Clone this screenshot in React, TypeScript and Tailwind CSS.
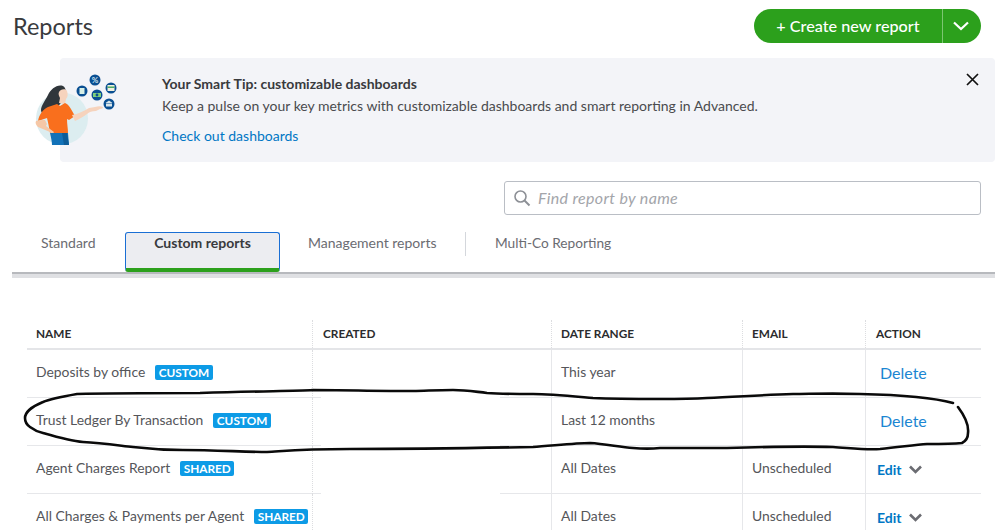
import React from "react";

const font = { fontFamily: '"Lato", "Open Sans", sans-serif' };

function Badge({ children }: { children: React.ReactNode }) {
  return (
    <span className="ml-[10px] inline-flex h-[15px] shrink-0 items-center rounded-[2px] bg-[#0d9be6] px-[3.5px] text-[11.8px] font-bold leading-none text-white">
      {children}
    </span>
  );
}

function Illustration() {
  return (
    <svg className="absolute left-[-25px] top-[13px]" width="90" height="78" viewBox="0 0 90 78">
      <circle cx="27" cy="47.5" r="26" fill="#dcedf0" />
      <path d="M28 15c-6-2-12 3-15 9-3 6-7 11-7 15 0 4 5 6 9 4l7-7c4-3 8-9 9-14 0-3-1-6-3-7z" fill="#30363b" />
      <path d="M24 21c1-3 7-4 8-1 1 3 1 6-1 8l-1 5-6-1 1-5c-1-2-2-4-1-6z" fill="#f6d3bd" />
      <path d="M15 62c-1-6-2-11-3-15l-9 3c1-6 5-12 10-14l9-3 3 2 5-3c4 1 7 8 10 13l-6 4-2-1c0 5 1 10 1 14z" fill="#f96f1d" />
      <path d="M1 50c-1 2 0 4 2 6l12 5 2 3 2-3-8-6 1-2-2-4c-3 0-7 0-9 1z" fill="#f5c7a6" />
      <path d="M37 44c6-1 12-4 17-7l6-1c3-1 6-1 8 0 0 1-1 2-3 2l-4 2c-4 0-7 1-9 3-3 2-7 5-12 7-1-2-2-4-3-6z" fill="#f6d3bd" />
      <path d="M15 62h18l1 12H17c0-3-1-8-2-12z" fill="#1272b8" />
      <path d="M27 62h5l2 12h-5z" fill="#0c5c98" />
      <circle cx="60" cy="9" r="5.5" fill="#0a4f92" />
      <text x="60" y="12" textAnchor="middle" fontSize="8" fill="#cfe4ee" fontFamily="Lato" fontWeight="700">%</text>
      <circle cx="47" cy="20" r="5.5" fill="#0a4f92" />
      <rect x="44.5" y="17" width="5" height="6" fill="#d7efe6" />
      <circle cx="76" cy="17" r="5.5" fill="#0a4f92" />
      <rect x="72.5" y="14" width="7" height="6" fill="#f2f0df" />
      <rect x="72.5" y="15.5" width="7" height="1.4" fill="#3aa35c" />
      <circle cx="62" cy="24" r="5.5" fill="#0a4f92" />
      <rect x="58" y="22" width="8" height="4" fill="#7fd07a" />
      <circle cx="62" cy="24" r="1.4" fill="#0a4f92" />
      <circle cx="74" cy="33" r="5.5" fill="#0a4f92" />
      <path d="M70.5 32l3.5-2.5 3.5 2.5zM71 32.5h6v3h-6z" fill="#d9e6ea" />
    </svg>
  );
}

const rows = [
  { name: "Deposits by office", badge: "CUSTOM", range: "This year", email: "", action: "delete" },
  { name: "Trust Ledger By Transaction", badge: "CUSTOM", range: "Last 12 months", email: "", action: "delete" },
  { name: "Agent Charges Report", badge: "SHARED", range: "All Dates", email: "Unscheduled", action: "edit" },
  { name: "All Charges & Payments per Agent", badge: "SHARED", range: "All Dates", email: "Unscheduled", action: "edit" },
];

export default function App() {
  return (
    <div style={font} className="relative h-[530px] w-[999px] overflow-hidden bg-white text-[#393a3d]">
      {/* header */}
      <div className="flex h-[58px] items-start justify-between pl-[13px] pr-[18px] pt-[9px]">
        <h1 className="mt-[1px] text-[23.5px] font-normal leading-[32px] text-[#393a3d]">Reports</h1>
        <div className="flex h-[34px] w-[227px] items-stretch overflow-hidden rounded-full bg-[#2ca01c] text-white">
          <div className="flex flex-1 items-center justify-center text-[16.2px] font-medium">+ Create new report</div>
          <div className="flex w-[39px] items-center justify-center border-l border-[#7cc672] pr-[3px]">
            <svg width="16" height="10" viewBox="0 0 16 10" fill="none" stroke="white" strokeWidth="2.2">
              <path d="M1 1.5l7 6.5 7-6.5" />
            </svg>
          </div>
        </div>
      </div>

      {/* tip */}
      <div className="relative ml-[60px] mr-[4px] h-[104px] rounded-[4px] bg-[#f3f4f8] pl-[102px] pt-[16px]">
        <Illustration />
        <div className="text-[14px] font-bold leading-[20px] text-[#393a3d]">Your Smart Tip: customizable dashboards</div>
        <div className="mt-[2px] text-[14px] leading-[20px] text-[#4a4b4e]">
          Keep a pulse on your key metrics with customizable dashboards and smart reporting in Advanced.
        </div>
        <div className="mt-[10px] text-[14px] leading-[20px] text-[#0077c5]">Check out dashboards</div>
        <svg className="absolute right-[16px] top-[15px]" width="13" height="13" viewBox="0 0 13 13" stroke="#111" strokeWidth="1.7">
          <path d="M1 1l11 11M12 1L1 12" />
        </svg>
      </div>

      {/* search */}
      <div className="mt-[19px] flex justify-end pr-[18px]">
        <div className="flex h-[34px] w-[477px] items-center rounded-[3px] border border-[#babec5] pl-[8px]">
          <svg width="18" height="18" viewBox="0 0 18 18" fill="none" stroke="#8d9096" strokeWidth="1.6">
            <circle cx="7.5" cy="7.5" r="5.5" />
            <path d="M11.5 11.5l5 5" strokeWidth="2" />
          </svg>
          <span className="ml-[7px] text-[16px] italic tracking-[0.35px] text-[#a3a5aa]">Find report by name</span>
        </div>
      </div>

      {/* tabs */}
      <div className="ml-[12px] mr-[4px] mt-[17px]">
        <div className="flex h-[40px] items-start">
          <div className="flex h-[21px] w-[113px] items-center pl-[29px] text-[14px] text-[#6b6c72]">Standard</div>
          <div className="flex h-[40px] w-[155px] justify-center rounded-[3px] border-[1.5px] border-b-[4px] border-[#1a6fd4] border-b-[#2ca01c] bg-[#ecedf1]">
            <span className="text-[14px] font-bold leading-[20px] text-[#393a3d]">Custom reports</span>
          </div>
          <div className="flex h-[21px] w-[185px] items-center pl-[28px] text-[14px] text-[#6b6c72]">Management reports</div>
          <div className="flex h-[24px] items-center border-l border-[#d4d7dc] pb-[2px] pl-[29px] text-[13.7px] text-[#6b6c72]">Multi-Co Reporting</div>
        </div>
        <div className="h-[6px] border-t-2 border-[#b7b9bd] bg-[#dfe0e3]" />
      </div>

      {/* table */}
      <div className="ml-[27px] mr-[18px] mt-[42px] w-[954px]">
        <div className="flex h-[30px] items-center border-b-2 border-[#e4e5e8] text-[11.8px] font-bold text-[#2b2c2e]">
          <div className="flex h-full w-[285px] items-center pl-[9px]">NAME</div>
          <div className="flex h-full w-[239px] items-center border-l border-dotted border-[#dcdde0] pl-[10px]">CREATED</div>
          <div className="flex h-full w-[191px] items-center border-l border-dotted border-[#dcdde0] pl-[9px]">DATE RANGE</div>
          <div className="flex h-full w-[123px] items-center border-l border-dotted border-[#dcdde0] pl-[9px]">EMAIL</div>
          <div className="flex h-full flex-1 items-center border-l border-dotted border-[#dcdde0] pl-[10px]">ACTION</div>
        </div>
        {rows.map((r) => (
          <div key={r.name} className="flex h-[48px] whitespace-nowrap text-[13.9px] text-[#55565a]">
            <div className="flex w-[285px] items-center border-b border-[#e6e7ea] pb-[2px] pl-[9px]">
              <span>{r.name}</span>
              <Badge>{r.badge}</Badge>
            </div>
            <div className="flex w-[239px] items-end border-l border-dotted border-[#dcdde0]">
              <div className="h-px w-[8px] bg-[#e6e7ea]" />
              <div className="ml-[179px] h-px flex-1 bg-[#e6e7ea]" />
            </div>
            <div className="flex w-[191px] items-center border-b border-l border-[#e6e7ea] pb-[2px] pl-[9px]">{r.range}</div>
            <div className="flex w-[123px] items-center border-b border-l border-[#e6e7ea] pb-[2px] pl-[9px]">{r.email}</div>
            <div className="flex flex-1 items-center border-b border-l border-[#e6e7ea] pl-[10px]">
              {r.action === "delete" ? (
                <span className="mb-[2px] ml-[4px] text-[16px] text-[#1b86d2]">Delete</span>
              ) : (
                <span className="ml-[1px] flex items-center text-[14px] font-bold text-[#0077c5]">
                  Edit
                  <svg className="ml-[7px]" width="13" height="9" viewBox="0 0 13 9" fill="none" stroke="#6b6c72" strokeWidth="2.6">
                    <path d="M1 1.5l5.5 5.5L12 1.5" />
                  </svg>
                </span>
              )}
            </div>
          </div>
        ))}
      </div>

      {/* hand-drawn ink */}
      <svg className="pointer-events-none absolute left-0 top-0" width="999" height="530" viewBox="0 0 999 530" fill="none" stroke="#0a0a0a" strokeWidth="2.6" strokeLinecap="round" strokeLinejoin="round">
        <path d="M953 403C935 398 905 395 860 394C830 393 810 394 793 394C760 395 735 397 707 398C690 399 675 399 660 399C640 399 615 399 593 398C570 396 550 394 533 394C515 394 500 394 487 393C470 391 465 390 453 390C435 390 425 391 413 391C380 391 340 390 313 390C295 391 270 391 200 393C160 393 110 393 77 394C60 397 50 399 43 402C33 406 25 412 25 418C25 422 27 425 30 427C34 430 38 432 43 433C60 438 70 441 83 442C100 443 115 445 133 447C150 449 165 450 183 450C215 450 245 452 267 452C285 451 300 449 350 449C420 449 480 448 533 447C550 446 575 443 590 443C605 444 620 447 633 448C645 449 650 449 660 448C680 448 700 448 727 448C760 447 800 446 833 447C850 448 865 450 880 449C900 447 915 445 927 444C940 444 952 444 962 443C966 441 968 438 968 433C969 425 964 415 958 407" />
      </svg>
    </div>
  );
}
